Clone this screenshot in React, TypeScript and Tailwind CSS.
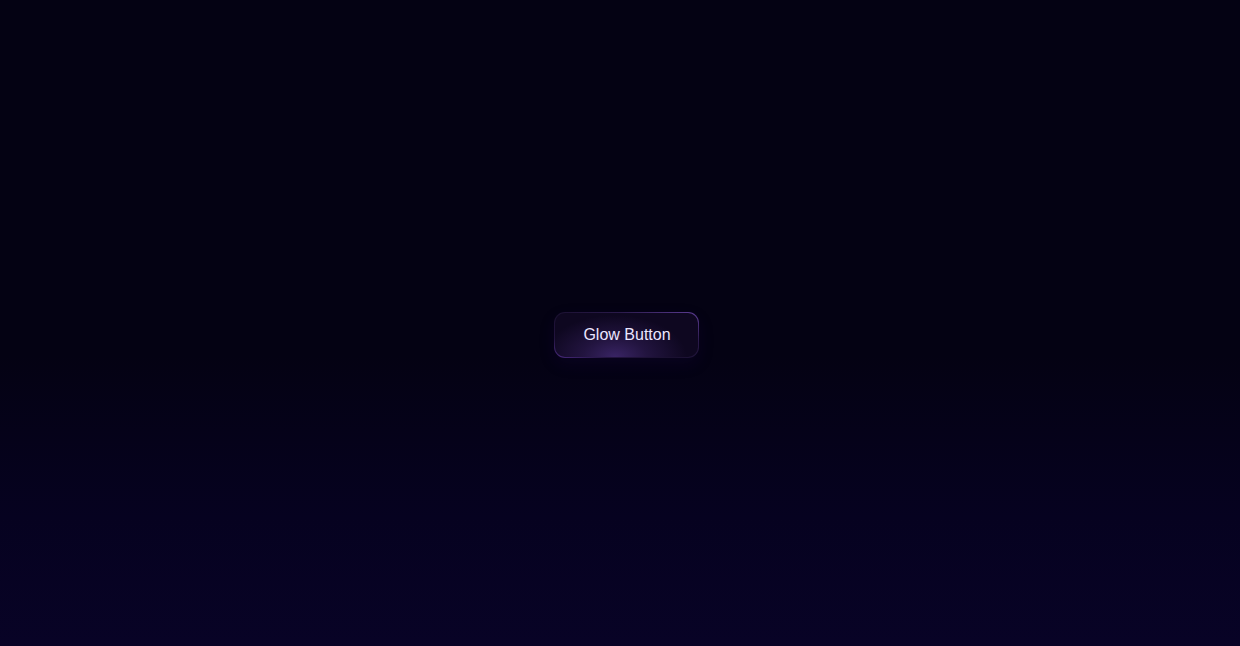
export default function App() {
  return (
    <div className="relative flex h-[646px] w-full items-center justify-center overflow-hidden bg-[linear-gradient(180deg,#040213_0%,#040213_55%,#060220_80%,#080326_100%)] font-['Liberation_Sans',Arial,sans-serif]">
      <button className="relative ml-[12px] mt-[24px] flex h-[46px] w-[145px] items-center justify-center rounded-[11px] bg-[linear-gradient(200deg,#5e3d96_0%,#2a1a4a_30%,#1a1030_55%,#22143e_80%,#4a2a80_100%)] p-px shadow-[0_6px_16px_rgba(40,15,100,0.15)]">
        <span className="flex h-full w-full items-center justify-center rounded-[10px] bg-[radial-gradient(ellipse_50%_95%_at_42%_100%,#392464_0%,#22143f_45%,#0e0720_100%)] pl-[2px] text-[16px] text-[#ece6ff]">
          Glow Button
        </span>
      </button>
    </div>
  )
}
